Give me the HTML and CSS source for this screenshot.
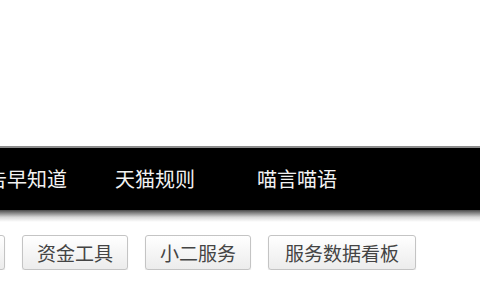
FILE: index.html
```html
<!DOCTYPE html>
<html lang="zh-CN">
<head>
  <meta charset="UTF-8" />
  <meta name="viewport" content="width=device-width, initial-scale=1.0" />
  <title>天猫服务</title>
  <link rel="stylesheet" href="styles.css">
</head>
<body>
  <div class="top"></div>
  <div class="navbar">
    <ul class="nav">
      <li class="nav-item first">公告早知道</li>
      <li class="nav-item">天猫规则</li>
      <li class="nav-item wide">喵言喵语</li>
    </ul>
  </div>
  <div class="navshadow"></div>
  <div class="tools">
    <button class="btn first">商家中心</button>
    <button class="btn">资金工具</button>
    <button class="btn">小二服务</button>
    <button class="btn wide">服务数据看板</button>
  </div>
</body>
</html>
```

FILE: styles.css
```css
body {
  margin: 0;
  background: #fff;
  font-family: "Noto Sans CJK SC", "Noto Sans", sans-serif;
  overflow: hidden;
}
.top {
  height: 146px;
}
.navbar {
  background: #000;
  border-top: 2px solid #8c8c8c;
  height: 62px;
  display: flex;
  align-items: center;
  overflow: hidden;
}
.nav {
  list-style: none;
  margin: 0;
  padding: 0;
  display: flex;
  gap: 48px;
  white-space: nowrap;
}
.nav-item {
  color: #f2f2f2;
  font-size: 20px;
  line-height: 24px;
}
.nav-item.first {
  margin-left: -33px;
}
.nav-item.wide {
  margin-left: 14px;
}
.navshadow {
  height: 12px;
  background: linear-gradient(#4a4a4a, #d8d8d8 60%, #fff);
}
.tools {
  display: flex;
  gap: 17px;
  margin-top: 13px;
  white-space: nowrap;
}
.btn {
  flex: none;
  height: 35px;
  padding: 0 14px;
  font-family: inherit;
  font-size: 19px;
  color: #444;
  background: linear-gradient(#fff, #ececec);
  border: 1px solid #c4c4c4;
  border-radius: 3px;
  box-shadow: 0 1px 1px rgba(0, 0, 0, 0.12);
}
.btn.wide {
  padding: 0 16px;
}
.btn.first {
  margin-left: -101px;
}
```
